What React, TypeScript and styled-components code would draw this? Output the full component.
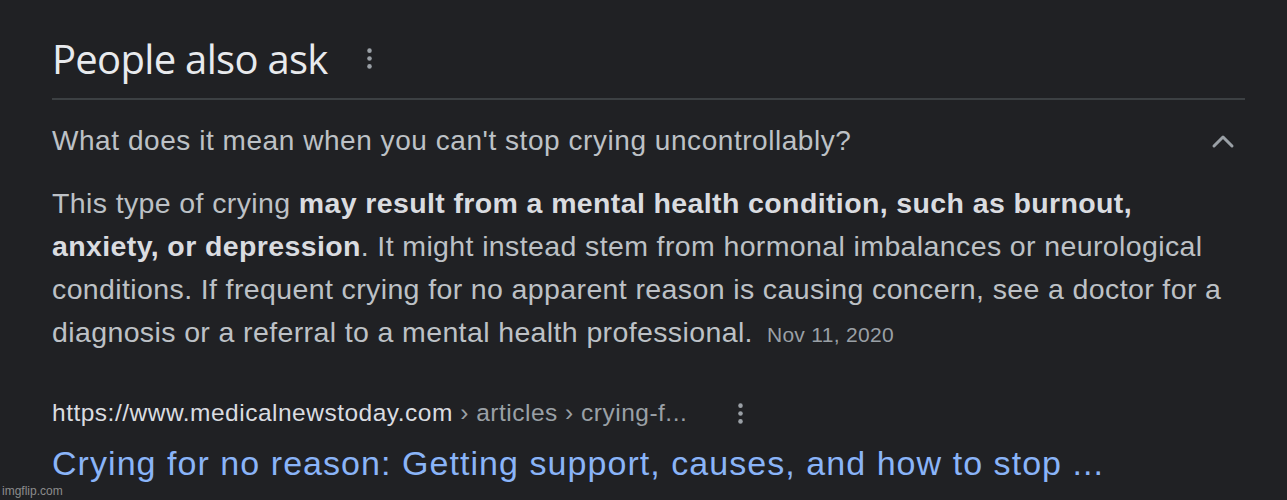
import React from "react";
import styled, { createGlobalStyle } from "styled-components";

const Global = createGlobalStyle`
  html, body { margin: 0; padding: 0; background: #202124; }
  body { width: 1287px; height: 500px; overflow: hidden; }
`;

const Page = styled.div`
  position: relative;
  width: 1287px;
  height: 500px;
  background: #202124;
  box-sizing: border-box;
  padding: 0 42px 0 52px;
  font-family: "Liberation Sans", Arial, sans-serif;
`;

const Header = styled.div`
  display: flex;
  align-items: center;
  height: 100px;
  border-bottom: 2px solid #3c4043;
  box-sizing: border-box;
  padding-top: 18px;
`;

const Title = styled.h2`
  margin: 0;
  font-family: "Open Sans", sans-serif;
  font-weight: 400;
  font-size: 40px;
  letter-spacing: -0.7px;
  color: #e8eaed;
`;

const DotsButton = styled.div<{ $ml: number }>`
  display: flex;
  margin-left: ${(p) => p.$ml}px;
  color: #9aa0a6;
`;

const QuestionRow = styled.div`
  display: flex;
  align-items: center;
  justify-content: space-between;
  height: 82px;
  padding-right: 10px;
`;

const Question = styled.div`
  font-size: 28px;
  letter-spacing: 0.55px;
  color: #bdc1c6;
`;

const Answer = styled.p`
  margin: 0;
  max-width: 1180px;
  font-size: 28.5px;
  letter-spacing: 0.38px;
  line-height: 43px;
  color: #bdc1c6;
  b { color: #dadce0; font-weight: 700; }
`;

const DateText = styled.span`
  font-size: 21px;
  letter-spacing: 0.3px;
  color: #9aa0a6;
  margin-left: 14px;
`;

const SourceRow = styled.div`
  display: flex;
  align-items: center;
  margin-top: 37px;
  height: 40px;
`;

const Url = styled.span`
  font-size: 24.5px;
  letter-spacing: 0.5px;
  color: #dadce0;
  span { color: #9aa0a6; }
`;

const LinkTitle = styled.a`
  display: block;
  font-size: 34px;
  letter-spacing: 1.05px;
  color: #8ab4f8;
  text-decoration: none;
  margin-top: 11px;
`;

const Watermark = styled.div`
  position: absolute;
  left: 2px;
  bottom: 2px;
  font-size: 12px;
  color: #8c8c8c;
`;

const VDots = ({ size }: { size: number }) => (
  <svg width={size} height={size * 3} viewBox="0 0 8 24" fill="currentColor">
    <circle cx="4" cy="3" r="2.6" />
    <circle cx="4" cy="12" r="2.6" />
    <circle cx="4" cy="21" r="2.6" />
  </svg>
);

const ChevronUp = () => (
  <svg width="24" height="16" viewBox="0 0 24 16" fill="none" stroke="#9aa0a6" strokeWidth="3" strokeLinecap="round" strokeLinejoin="round">
    <polyline points="3,13 12,4 21,13" />
  </svg>
);

export default function App() {
  return (
    <>
      <Global />
      <Page>
        <Header>
          <Title>People also ask</Title>
          <DotsButton $ml={38}>
            <VDots size={7} />
          </DotsButton>
        </Header>
        <QuestionRow>
          <Question>What does it mean when you can't stop crying uncontrollably?</Question>
          <ChevronUp />
        </QuestionRow>
        <Answer>
          This type of crying <b>may result from a mental health condition, such as burnout, anxiety, or depression</b>. It might instead stem from hormonal imbalances or neurological conditions. If frequent crying for no apparent reason is causing concern, see a doctor for a diagnosis or a referral to a mental health professional.
          <DateText>Nov 11, 2020</DateText>
        </Answer>
        <SourceRow>
          <Url>
            https://www.medicalnewstoday.com<span> › articles › crying-f...</span>
          </Url>
          <DotsButton $ml={50}>
            <VDots size={7} />
          </DotsButton>
        </SourceRow>
        <LinkTitle href="#">Crying for no reason: Getting support, causes, and how to stop ...</LinkTitle>
        <Watermark>imgflip.com</Watermark>
      </Page>
    </>
  );
}
